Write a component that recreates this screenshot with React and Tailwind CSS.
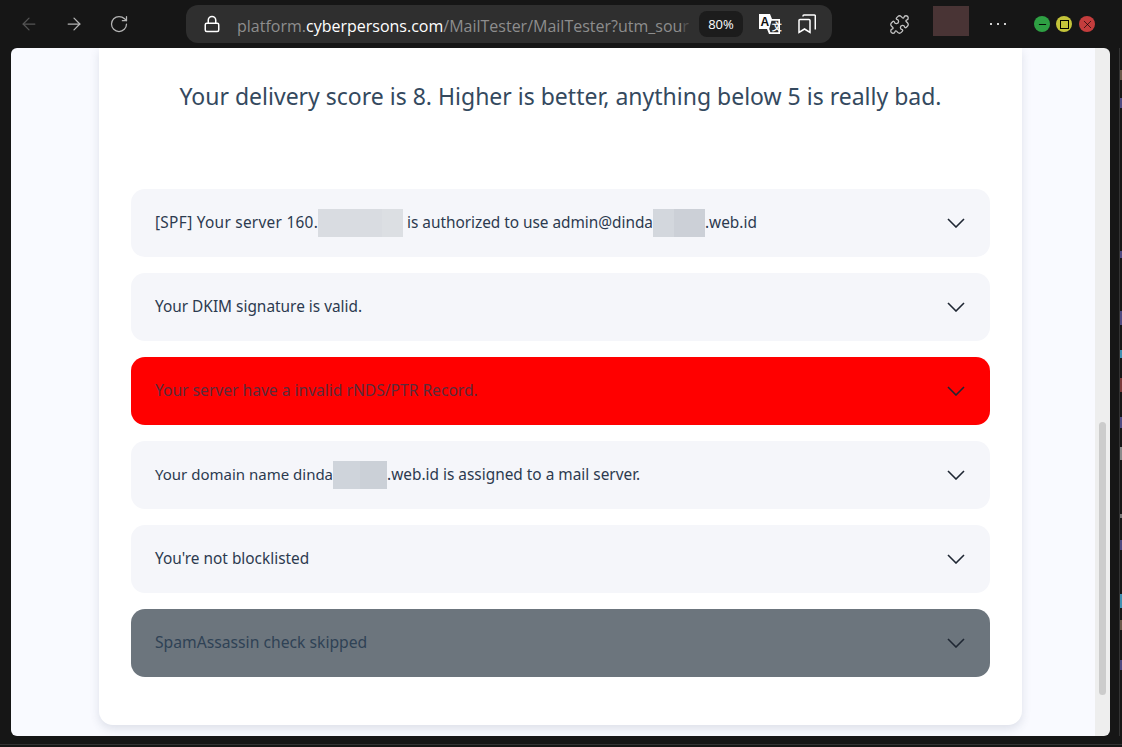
import React from "react";
import { ArrowLeft, ArrowRight, RotateCw, Lock, Puzzle, Minus, X } from "lucide-react";

const specks = [
    "mt-[22px] h-[10px] bg-[#6b5a4a]",
    "mt-[18px] h-[10px] bg-[#4f4a80]",
    "mt-[143px] h-[7px] bg-[#4f4a80]",
    "mt-[53px] h-[14px] bg-[#4f4a80]",
    "mt-[25px] h-[8px] bg-[#3f8fb0]",
    "mt-[20px] h-[14px] bg-[#7a3a3a]",
    "mt-[25px] h-[11px] bg-[#4f4a80]",
    "mt-[19px] h-[13px] bg-[#8a8a8a]",
    "mt-[54px] h-[4px] bg-[#777777]",
    "mt-[22px] h-[10px] bg-[#4f4a80]",
    "mt-[44px] h-[14px] bg-[#3f8fb0]",
    "mt-[12px] h-[10px] bg-[#6b5a4a]",
    "mt-[30px] h-[10px] bg-[#4f4a80]",
];

function Redacted({ className }) {
    return <span className={`inline-block h-[28px] shrink-0 ${className}`} />;
}

function Row({ bg = "bg-[#f5f6fa]", text = "text-[15.4px] text-[#2c3a4f]", children }) {
    return (
        <div className={`flex h-[68px] items-center justify-between rounded-[14px] pl-[24px] pr-[25px] ${bg}`}>
            <div className={`flex items-center whitespace-pre pb-[1px] ${text}`}>{children}</div>
            <svg width="18" height="10" viewBox="0 0 18 10" fill="none" stroke="#1f2733" strokeWidth="1.6">
                <path d="M1 1l8 8 8-8" />
            </svg>
        </div>
    );
}

function BrowserBar() {
    return (
        <div className="flex h-[48px] shrink-0 items-center bg-[#161616] font-['Open_Sans',sans-serif]">
            <ArrowLeft size={20} strokeWidth={1.5} className="ml-[19px] text-[#555555]" />
            <ArrowRight size={20} strokeWidth={1.5} className="ml-[25px] text-[#b5b5b5]" />
            <RotateCw size={20} strokeWidth={1.5} className="ml-[25px] text-[#b5b5b5]" />
            <div className="ml-[57px] flex h-[38px] w-[646px] items-center rounded-xl bg-[#2f2f2f] pl-[17px]">
                <Lock size={18} strokeWidth={2} className="shrink-0 text-white" />
                <div className="ml-[16px] w-[455px] overflow-hidden whitespace-nowrap pt-[3px] text-[16px] text-[#8d8d8d]">
                    platform.<span className="text-white">cyberpersons.com</span>/MailTester/MailTester?utm_sou<span className="text-[#555555]">r</span>
                </div>
                <div className="ml-[7px] flex h-[26px] w-[44px] shrink-0 items-center justify-center rounded-lg bg-[#1c1c1c] pt-[2px] text-[13px] text-white">
                    80%
                </div>
                <svg width="24" height="22" viewBox="0 0 24 22" className="ml-[15px] shrink-0">
                    <path d="M1 1h11l2 5h8v15H11l-2-5H1z" fill="#ffffff" />
                    <path d="M13 7h8v13h-9l-1.500-4z" fill="#2f2f2f" stroke="#ffffff" strokeWidth="1.300" />
                    <text x="2.500" y="13" fontSize="12" fontWeight="700" fill="#111111" fontFamily="Liberation Sans, sans-serif">A</text>
                    <text x="14" y="17" fontSize="10" fontWeight="700" fill="#ffffff" fontFamily="Noto Sans, sans-serif">文</text>
                </svg>
                <svg width="18" height="20" viewBox="0 0 18 20" fill="none" stroke="#ffffff" strokeWidth="1.500" className="ml-[16px] shrink-0">
                    <path d="M1 6.500a1 1 0 0 1 1-1h9a1 1 0 0 1 1 1V18.500l-5.500-3.500L1 18.500z" />
                    <path d="M5 2.500V2a1 1 0 0 1 1-1h10.500a.8.800 0 0 1 .8.800V15.500" />
                </svg>
            </div>
            <Puzzle size={21} strokeWidth={1.5} className="ml-[57px] text-[#c4c4c4]" />
            <div className="mb-[6px] ml-[23px] h-[30px] w-[36px] bg-[#493435]" />
            <div className="ml-[21px] flex gap-[5px]">
                <span className="h-[2px] w-[2px] bg-[#d0d0d0]" />
                <span className="h-[2px] w-[2px] bg-[#d0d0d0]" />
                <span className="h-[2px] w-[2px] bg-[#d0d0d0]" />
            </div>
            <div className="ml-[28px] flex items-center gap-[6px]">
                <div className="flex h-[16px] w-[16px] items-center justify-center rounded-full bg-[#2ea043]">
                    <Minus size={11} strokeWidth={2} className="text-black" />
                </div>
                <div className="flex h-[16px] w-[16px] items-center justify-center rounded-full bg-[#c4c43a]">
                    <div className="h-[9px] w-[9px] border-[1.500px] border-black" />
                </div>
                <div className="ml-[1px] flex h-[16px] w-[16px] items-center justify-center rounded-full bg-[#c43d3d]">
                    <X size={13} strokeWidth={1.200} className="text-black" />
                </div>
            </div>
        </div>
    );
}

export default function App() {
    return (
        <div className="flex h-[747px] w-[1122px] flex-col overflow-hidden bg-[#161616] font-['Noto_Sans',sans-serif]">
            <BrowserBar />

            <div className="flex h-[688px] shrink-0">
                <div className="ml-[11px] flex w-[1099px] overflow-hidden rounded-[6px]">
                    <div className="w-[1084px] bg-[#f9faff] pl-[88px]">
                        <div className="h-[677px] w-[923px] rounded-b-[14px] bg-white px-[32px] shadow-[0_4px_10px_rgba(60,70,100,0.14)]">
                            <h1 className="pt-[32px] pb-[1px] text-center text-[23px] leading-[32px] text-[#34495e]">
                                Your delivery score is 8. Higher is better, anything below 5 is really bad.
                            </h1>
                            <div className="mt-[76px] flex flex-col gap-[16px]">
                                <Row>
                                    <span className="tracking-[0.27px]">[SPF] Your server 160.</span>
                                    <Redacted className="mr-[4px] w-[85px] bg-[linear-gradient(90deg,#d9dce1_0_75%,#dcdfe3_75%)]" />
                                    <span className="tracking-[-0.03px]">is authorized to use admin@dinda</span>
                                    <Redacted className="w-[52px] bg-[linear-gradient(90deg,#d3d7dd_0_40%,#ccd0d7_40%)]" />
                                    .web.id
                                </Row>
                                <Row>Your DKIM signature is valid.</Row>
                                <Row bg="bg-[#ff0000]" text="text-[15.6px] text-[#5a2c3c]">Your server have a invalid rNDS/PTR Record.</Row>
                                <Row>
                                    <span className="text-[15px]">Your domain name dinda</span>
                                    <Redacted className="w-[54px] bg-[linear-gradient(90deg,#cfd4db_0_50%,#cbd0d7_50%)]" />
                                    .web.id is assigned to a mail server.
                                </Row>
                                <Row>You're not blocklisted</Row>
                                <Row bg="bg-[#6c757d]" text="text-[15.7px] text-[#2f4255]">SpamAssassin check skipped</Row>
                            </div>
                        </div>
                    </div>
                    <div className="w-[15px] bg-[#eeeeee] pl-[4px] pt-[374px]">
                        <div className="h-[273px] w-[7px] rounded-full bg-[#cccccc]" />
                    </div>
                </div>
                <div className="ml-[9px] w-[3px] border-l border-[#333333]">
                    {specks.map((speck) => (
                        <div key={speck} className={`w-[2px] ${speck}`} />
                    ))}
                </div>
            </div>

            <div className="h-[11px] overflow-hidden">
                <div className="mt-[8px] border-t border-[#333333] pl-[775px] whitespace-nowrap text-[17px] font-semibold leading-[20px] text-[#5a5590]">
                    Cara Kelola DKIM DNS Record di Cyber
                </div>
            </div>
        </div>
    );
}
